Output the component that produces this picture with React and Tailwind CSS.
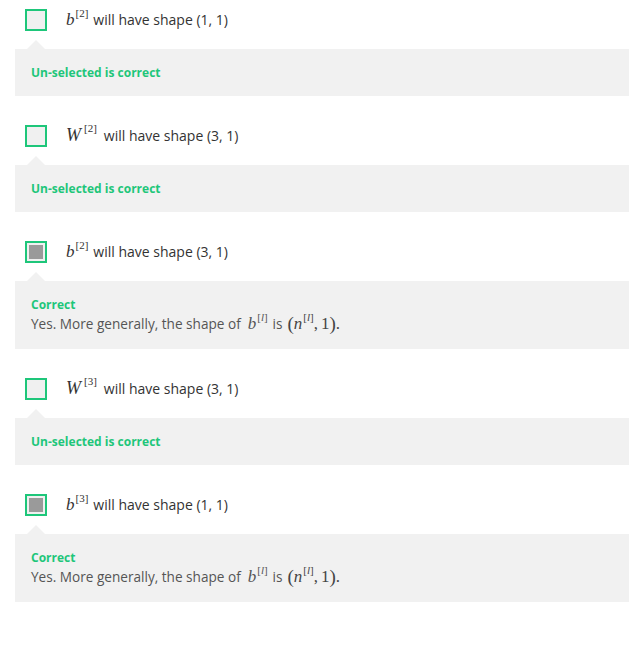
import React from "react";

const SERIF = { fontFamily: '"Liberation Serif", "DejaVu Serif", serif' };

function MathVar({ v, sup }) {
  const isW = v === "W";
  return (
    <span className="inline-flex items-start">
      <span className={`italic ${isW ? "text-[18px]" : "text-[17px]"} leading-none text-[#333]`} style={SERIF}>
        {v}
      </span>
      <span
        className={`text-[11px] leading-none -mt-[3px] ${isW ? "ml-[3px]" : "ml-[1px]"} text-[#333]`}
        style={SERIF}
      >
        [{sup}]
      </span>
    </span>
  );
}

function SupL({ v }) {
  return (
    <span className="inline-flex items-start">
      <span className="italic text-[17px] leading-none" style={SERIF}>
        {v}
      </span>
      <span className="text-[11px] leading-none -mt-[3px] ml-[1px]" style={SERIF}>
        [<span className="italic">l</span>]
      </span>
    </span>
  );
}

function Checkbox({ checked }) {
  return (
    <div className="w-[22px] h-[22px] border-2 border-[#1ec67a] bg-[#f0f0f0] flex items-center justify-center shrink-0">
      {checked && <div className="w-[14px] h-[14px] bg-[#9a9a9a]" />}
    </div>
  );
}

function Item({ v, sup, shape, checked }) {
  const isW = v === "W";
  return (
    <div className="flex flex-col">
      <div className="flex items-center pl-[10px] h-[22px]">
        <Checkbox checked={checked} />
        <div
          className="ml-[19px] -mt-[2px] flex items-center text-[14px] text-[#333]"
          style={{ fontFamily: '"Open Sans", sans-serif' }}
        >
          <MathVar v={v} sup={sup} />
          <span className={isW ? "ml-[7px]" : "ml-[5px]"}>will have shape {shape}</span>
        </div>
      </div>
      <div
        className="relative mt-[18px] bg-[#f1f1f1] px-[16px] py-[15px]"
        style={{ fontFamily: '"Open Sans", sans-serif' }}
      >
        <div className="absolute left-[12px] -top-[9px] w-0 h-0 border-l-[9px] border-r-[9px] border-b-[9px] border-l-transparent border-r-transparent border-b-[#f1f1f1]" />
        {checked ? (
          <>
            <div className="text-[12px] font-bold leading-[17px] text-[#1ec67a]">Correct</div>
            <div className="text-[13.6px] leading-[21px] text-[#555] flex items-center">
              <span>Yes. More generally, the shape of</span>
              <span className="ml-[7px]">
                <SupL v="b" />
              </span>
              <span className="ml-[5px]">is</span>
              <span className="ml-[5px] inline-flex items-center text-[17px] text-[#444]" style={SERIF}>
                <span className="text-[19px] leading-none">(</span>
                <SupL v="n" />
                <span>,</span>
                <span className="ml-[3px]">1</span>
                <span className="text-[19px] leading-none">)</span>
                <span>.</span>
              </span>
            </div>
          </>
        ) : (
          <div className="text-[12px] font-bold leading-[17px] text-[#1ec67a]">Un-selected is correct</div>
        )}
      </div>
    </div>
  );
}

export default function App() {
  const items = [
    { v: "b", sup: "2", shape: "(1, 1)", checked: false },
    { v: "W", sup: "2", shape: "(3, 1)", checked: false },
    { v: "b", sup: "2", shape: "(3, 1)", checked: true },
    { v: "W", sup: "3", shape: "(3, 1)", checked: false },
    { v: "b", sup: "3", shape: "(1, 1)", checked: true },
  ];
  return (
    <div className="bg-white w-[638px] h-[665px] pl-[15px] pt-[9px]">
      <div className="w-[614px] flex flex-col gap-[29px]">
        {items.map((it, i) => (
          <Item key={i} {...it} />
        ))}
      </div>
    </div>
  );
}
